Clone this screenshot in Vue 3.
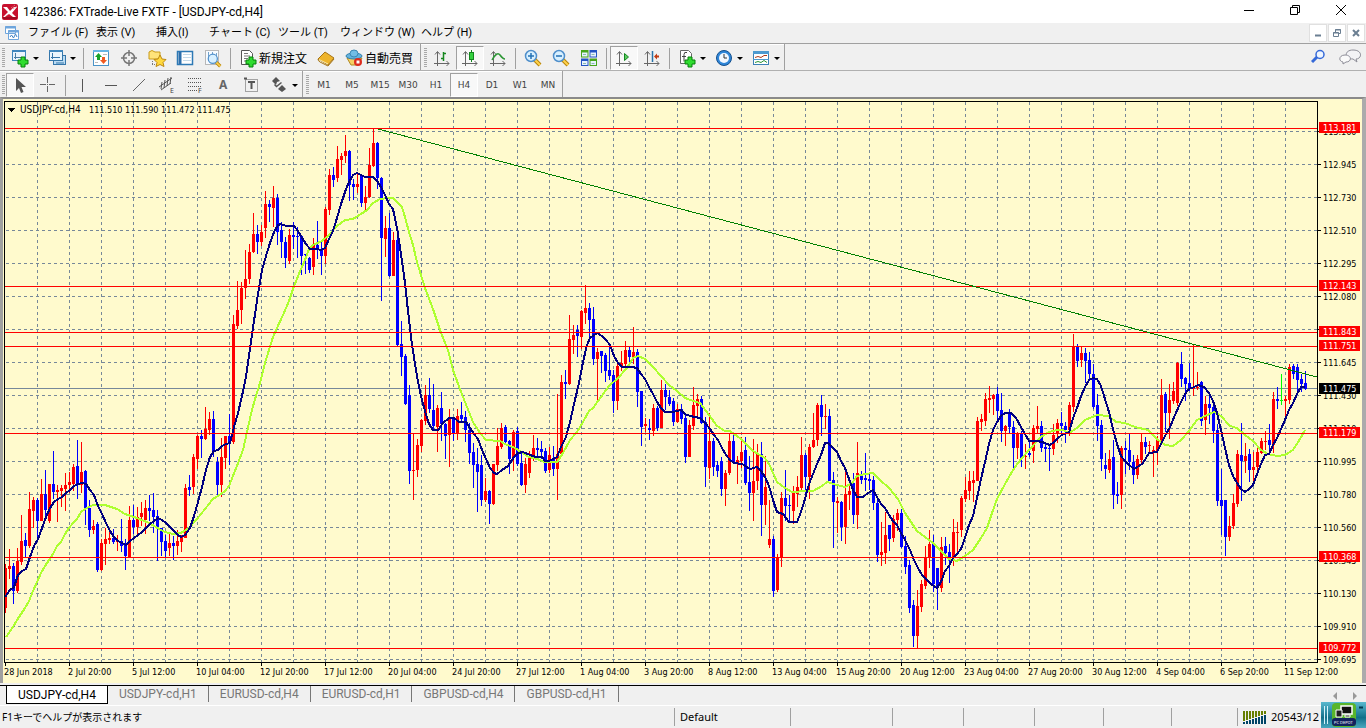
<script setup>
import { ref } from 'vue'

const menus = ['ファイル (F)', '表示 (V)', '挿入(I)', 'チャート (C)', 'ツール (T)', 'ウィンドウ (W)', 'ヘルプ (H)']
const frames = ['M1', 'M5', 'M15', 'M30', 'H1', 'H4', 'D1', 'W1', 'MN']
const frame = ref('H4')
const tabs = ['USDJPY-cd,H4', 'USDJPY-cd,H1', 'EURUSD-cd,H4', 'EURUSD-cd,H1', 'GBPUSD-cd,H4', 'GBPUSD-cd,H1']
const tab = ref(0)

const axes = '<path d="M4.500 3v14M1 14.500h15M2 5.500l2.500-3 2.500 3M13.500 12l2.500 2.500-2.500 2.500" fill="none" stroke="#666"/>'
const plus = '<path d="M10 8h4v3h3v4h-3v3h-4v-3H7v-4h3z" fill="#2fdc2f" stroke="#07800a"/>'
const lens = '<path d="M10 10l6 6" stroke="#b8860b" stroke-width="4"/><path d="M10 10l6 6" stroke="#ffd24d" stroke-width="2"/><circle cx="7" cy="7" r="5.500" fill="#d8f0ff" stroke="#4f8fcb" stroke-width="1.500"/>'

const icons = {
  newChart: '<rect x="1.500" y="1.500" width="13" height="10" fill="#eaf4fd" stroke="#3f86bd"/><path d="M1 2h14" stroke="#3f86bd" stroke-width="2"/><path d="M4.500 4v6M3 8.500h8" stroke="#4a7da5"/>' + plus,
  profiles: '<rect x="5.500" y="6.500" width="12" height="9" fill="#bcdcf3" stroke="#3576aa"/><rect x="1.500" y="1.500" width="13" height="10" fill="#eaf5fd" stroke="#3576aa"/><path d="M1 2h14" stroke="#3f86bd" stroke-width="2"/><path d="M4.500 4v6M3 8.500h9M8 14h8" stroke="#3576aa"/>',
  market: '<rect x="1.500" y="1.500" width="15" height="15" fill="#fff" stroke="#4a93c8"/><path d="M1 2h16" stroke="#67b5e4" stroke-width="2"/><path d="M5 11V8H3l3.500-4L10 8H8v3z" fill="#18a32a"/><path d="M10 8h3v3h2l-3.500 4L8 11h2z" fill="#f05a20"/><path d="M11 5.500h4M3 13.500h3" stroke="#bbb"/>',
  crosshair: '<circle cx="9" cy="9" r="5.500" fill="none" stroke="#777" stroke-width="1.500"/><path d="M9 1v6M9 11v6M1 9h6M11 9h6" stroke="#777" stroke-width="1.500"/>',
  navigator: '<path d="M1 3q3-3 6 0h5v7H1z" fill="#ffe37a" stroke="#c99b1a"/><path d="M4.500 12v4M4 15.500h4" stroke="#777" stroke-dasharray="1 1"/><path d="M12 6l2 4 4 .5-3 3 1 4-4-2-4 2 1-4-3-3 4-.5z" fill="#ffd93d" stroke="#be8810"/>',
  terminal: '<rect x="1.500" y="2.500" width="15" height="13" fill="#fff" stroke="#2d79b5" stroke-width="1.500"/><path d="M4 3v12" stroke="#2d6eab" stroke-width="3"/><path d="M7 5.500h8M7 8.500h8M7 11.500h8" stroke="#c4d9e8"/>',
  tester: '<rect x="1.500" y="1.500" width="13" height="14" fill="#f7fbff" stroke="#b8b8b8"/><path d="M4.500 3v8M8.500 3v8M12.500 4v8" stroke="#73a2ca"/><g transform="translate(3 4) scale(.83)">' + lens + '</g>',
  order: '<path d="M2.500 1.500h8l3 3v11h-11z" fill="#fff" stroke="#555"/><path d="M5 4.500h4M5 7h6M5 9.500h4M5 12h2" stroke="#777"/>' + plus,
  book: '<path d="M1 10l7-7 9 6-6 7z" fill="#eeb42c" stroke="#a77516"/><path d="M2 10.500l9 4.500" fill="none" stroke="#fff0b0"/><path d="M1 10q0 2 2 3l8 4 6-7" fill="none" stroke="#a77516"/>',
  expert: '<path d="M2 9l4 7h7l4-7z" fill="#f5d062" stroke="#b08a24"/><ellipse cx="9" cy="7" rx="8" ry="3" fill="#63b3df" stroke="#327fab"/><ellipse cx="9" cy="4.500" rx="4" ry="3.500" fill="#72bde5" stroke="#3a87b3"/><circle cx="13" cy="13" r="4" fill="#dc2b1c"/><rect x="11.500" y="11.500" width="3" height="3" fill="#fff"/>',
  bars: axes + '<path d="M10.500 3v9M8 9.500h3M10 4.500h3" stroke="#14861e" stroke-width="1.500" fill="none"/>',
  candles: axes + '<path d="M10.500 1v12" stroke="#14861e"/><rect x="8.500" y="3.500" width="4" height="7" fill="#35d13f" stroke="#14861e"/>',
  line: axes + '<path d="M3 11q5-9 8-5t5 4" stroke="#2b9634" stroke-width="1.500" fill="none"/>',
  zoomIn: lens + '<path d="M4 7h6M7 4v6" stroke="#2471b5" stroke-width="1.500"/>',
  zoomOut: lens + '<path d="M4 7h6" stroke="#2471b5" stroke-width="1.500"/>',
  tile: '<path d="M1 1h7.500v7.500H1zM9.500 9.500H17V17H9.500z" fill="#47a61b"/><path d="M9.500 1H17v7.500H9.500zM1 9.500h7.500V17H1z" fill="#2455c4"/><path d="M2 3.500h5.500v4H2zM10.500 3.500H16v4h-5.500zM2 12h5.500v4H2zM10.500 12H16v4h-5.500z" fill="#e8f3ff"/><path d="M3 5.500h3M11.500 5.500h3M3 14.500h3M11.500 14.500h3" stroke="#8abcb0"/>',
  scroll: axes + '<path d="M9.500 4.500l4 3.500-4 3.500z" fill="#5ccc62" stroke="#14861e"/>',
  shift: axes + '<path d="M9.500 2v11" stroke="#2672a8" stroke-width="1.500"/><path d="M11 7.500l3-3v2h2v2h-2v2z" fill="#c03b12"/>',
  indicators: '<path d="M2.500 1.500h8l3 3v10h-11z" fill="#fff" stroke="#666"/><path d="M9 3.500q-3-1-3 2v7M4 7.500h4" stroke="#444" fill="none"/>' + plus,
  clock: '<circle cx="9" cy="9" r="7.500" fill="#2f86d8" stroke="#15508e"/><circle cx="9" cy="9" r="5" fill="#f2f8ff"/><path d="M9 5v4h3" fill="none" stroke="#333"/>',
  template: '<rect x="1.500" y="2.500" width="15" height="13" fill="#fff" stroke="#3c80b5"/><path d="M1 3.500h16" stroke="#4d9ad0" stroke-width="3"/><path d="M1 10.500h16" stroke="#4d9ad0"/><path d="M3 8.500l3-1 3 1 3-2h3" fill="none" stroke="#b03a18"/><path d="M3 13.500l3-1 3 1 3-2 3 2" fill="none" stroke="#2a9437"/>',
  cursor: '<path d="M5 2v13l3-3 2 5 2.500-1-2-5H15z" fill="#555"/>',
  cross: '<path d="M8.500 1v6M8.500 10v6M1 8.500h6M10 8.500h6M8 8.500h1" stroke="#666"/>',
  vline: '<path d="M8.500 3v13" stroke="#555"/>',
  hline: '<path d="M3 9.500h12" stroke="#555"/>',
  trend: '<path d="M3 15L15 3" stroke="#666"/>',
  channel: '<path d="M1 11L14 2M3 14L13 7M4 6l-1 7M7 4l-1 8M10 2L9 10M13 1l-1 7" stroke="#555"/><text x="12" y="17">E</text>',
  fibo: '<path d="M2 2.500h14M2 6.500h14M2 10.500h14M2 14.500h9" stroke="#555" stroke-dasharray="1 1"/><text x="12" y="17">F</text>',
  text: '<text x="5" y="13" class="big">A</text>',
  label: '<rect x="3.500" y="3.500" width="12" height="12" fill="none" stroke="#555" stroke-dasharray="1 1"/><path d="M2 2.500h3M6 6h7M9.500 6v7" stroke="#555" stroke-width="2"/>',
  arrows: '<path d="M6 1l4 4-3 1-1 3-4-4zM12 9l4 4-4 3-4-3z" fill="#555"/><path d="M4.500 8.500l2 2 5-4" fill="none" stroke="#555" stroke-width="1.500"/>'
}

const row1 = ['newChart+', 'profiles+', '|', 'market', 'crosshair', 'navigator', 'terminal', 'tester', '|']
const row1b = ['bars', 'candles*', 'line', '|', 'zoomIn', 'zoomOut', 'tile', '|', 'scroll*', 'shift', '|', 'indicators+', 'clock+', 'template+']
const row2 = ['cursor*', 'cross', '|', 'vline', 'hline', 'trend', 'channel', 'fibo', 'text', 'label', 'arrows+']

const tools = list => list.map(t => ({
  id: t.replace(/[+*]/, ''),
  drop: t.endsWith('+'),
  on: t.endsWith('*')
}))

const groups1 = [tools(row1), tools(row1b)]
const group2 = tools(row2)

// one bar each: colour, high, body top, body bottom, low
const bars = `
r564,568,608,613 r549,566,569,579 b563,566,591,604 r548,561,591,593 r515,541,562,565 b533,540,546,557 r492,509,546,548 r497,500,511,528
b498,500,521,542 r479,494,521,521 b470,494,510,518 r484,484,521,523 b451,484,492,499 r485,490,492,522 r485,488,491,507 r473,485,489,511
r472,482,485,493 r464,467,484,491 b440,466,484,499 r442,472,485,493 b470,471,508,525 b500,508,530,537 r520,526,530,534 b522,524,570,572
r539,543,570,571 r528,539,544,565 r532,538,540,544 b529,538,542,544 r535,541,542,551 b519,541,546,552 b539,545,556,570 r506,520,557,557
b505,520,527,534 r507,517,527,535 r502,513,517,526 r500,508,520,534 b495,508,511,521 b493,510,517,533 b510,516,528,561 b528,528,542,556
b535,541,551,557 r534,543,548,556 b536,543,546,560 r530,541,546,555 r535,536,542,552 r484,488,538,538 b475,487,490,496 r454,457,487,494
r435,436,459,469 b430,436,439,458 r407,429,439,440 r412,419,430,435 b411,419,451,457 b457,462,485,495 r438,457,485,497 r436,436,458,469
b414,436,442,465 r315,324,442,444 r281,310,326,329 r282,288,310,324 r250,279,288,299 r244,252,279,284 r213,234,252,253 b225,234,242,254
r225,232,242,246 r191,204,228,238 b200,204,207,222 r186,198,208,227 b194,198,232,245 b222,230,242,258 b237,242,258,268 r229,235,261,264
b222,235,237,249 b227,236,237,258 b235,236,256,275 b254,254,255,274 b257,258,270,273 r238,244,267,275 b221,245,250,259 b242,250,256,275
r207,209,256,264 r169,175,210,215 b167,175,180,187 r146,159,178,182 r153,156,160,175 r135,151,156,163 b150,151,185,201 b179,184,187,200
r174,184,187,193 b175,176,203,207 r186,197,203,210 r148,165,197,198 r129,143,166,167 b142,143,178,189 b177,178,238,301 r216,228,239,257
b213,228,276,277 r232,240,276,276 b235,240,345,346 b321,344,357,376 b354,356,404,405 b385,395,471,484 r433,470,471,500 r439,445,470,477
r419,420,446,452 r385,395,421,425 b378,395,409,413 b384,410,426,429 r405,408,427,452 b392,408,424,441 b423,424,436,459 r409,418,435,467
b418,418,434,441 r409,416,433,440 b402,415,419,423 b411,417,430,442 b423,430,453,464 b443,452,465,488 b448,464,472,512 b455,465,500,506
r478,491,500,502 b490,491,504,524 r464,464,504,505 r428,446,465,471 r423,428,447,449 b425,427,442,445 b440,441,459,474 r430,432,457,471
b427,431,464,466 b453,463,485,486 r458,464,485,493 r451,458,473,478 r435,448,459,461 b438,448,450,457 b441,449,452,459 b448,451,471,473
r447,455,470,473 b446,458,469,476 r394,454,469,500 r375,382,454,455 b370,382,384,399 r315,339,384,385 r325,335,340,354 b325,330,336,357
r310,311,337,349 r285,308,313,324 b303,308,320,337 b307,319,359,365 r348,352,359,400 b351,351,356,373 b353,355,371,382 b345,370,376,380
b370,375,401,413 r363,366,401,410 r351,363,367,371 r341,350,364,366 b347,350,357,363 r327,352,357,364 b349,352,392,407 b391,391,427,446
r418,424,426,432 b419,428,430,440 r404,408,431,436 b406,408,428,431 r380,390,428,428 b384,390,397,410 b390,397,404,406 b398,401,422,426
r404,409,422,423 b404,409,419,424 b415,418,457,463 r420,425,457,457 r387,405,426,430 r394,399,406,417 b396,399,423,424 b417,422,467,487
r413,441,468,479 b438,441,467,476 b461,465,471,477 b457,461,489,496 r470,473,489,506 r434,441,473,475 b432,441,463,464 r456,460,463,484
r437,452,461,468 b437,450,483,485 b456,482,493,511 r439,481,493,521 r444,454,481,490 b442,454,505,536 r456,487,505,525 r500,539,545,548
b536,539,591,597 r554,557,590,592 r492,498,558,567 b470,498,506,521 b495,505,506,523 r486,492,511,524 r476,487,494,507 r437,455,488,491
b453,455,477,493 r444,447,477,499 r413,440,447,448 r403,405,440,446 b395,405,417,436 r404,416,417,429 b409,416,481,481 b472,480,502,548
r497,501,503,533 b501,502,527,541 r471,494,527,544 r481,491,495,510 b473,483,515,524 r442,473,515,529 b471,475,480,484 b453,478,480,491
b474,479,481,490 b476,480,503,510 b500,503,555,562 r522,552,555,566 r512,535,553,564 b525,525,539,551 r515,519,538,542 r509,513,520,531
b509,513,547,548 b536,546,567,574 b560,565,608,613 b600,605,636,647 r590,606,636,648 r580,584,607,612 r546,557,586,589 r530,544,558,568
b535,544,584,592 b568,568,588,610 r537,547,588,592 b537,546,553,565 b544,552,559,583 r519,532,558,566 r522,532,533,555 r496,498,530,537
r477,490,499,502 r471,481,491,500 r471,480,483,502 r417,421,481,481 r414,419,422,431 r393,399,421,426 r386,398,400,413 r394,395,399,415
b387,394,411,423 b393,410,431,442 r425,426,431,446 b409,413,427,433 b421,427,448,470 r432,433,448,459 b431,434,458,467 r444,456,457,469
b442,453,455,457 r425,428,451,463 r406,426,429,434 b421,426,448,452 b444,447,449,462 b444,448,449,471 r424,435,449,455 r419,423,433,443
b412,423,426,433 b422,426,430,443 r402,405,430,436 r334,347,407,412 b344,347,361,367 r347,353,360,367 b348,353,361,383 b352,360,374,381
b364,374,407,409 b394,405,426,441 b420,425,459,471 b453,465,469,479 r450,459,470,473 b440,457,495,509 b482,494,496,504 r446,448,495,509
b441,448,450,474 b434,450,462,470 b455,462,475,484 r455,459,475,479 r434,442,460,465 b437,442,447,454 r441,445,446,454 r446,450,453,477
r436,440,451,465 r379,395,440,441 b392,394,413,432 r384,400,413,439 r382,391,401,404 r362,363,403,406 b352,364,379,387 b377,378,384,401
b363,383,389,391 r344,387,389,396 r372,387,388,390 b381,382,421,426 r396,404,420,435 b394,404,408,424 b400,407,431,443 b424,430,501,506
b469,500,506,535 b500,500,537,556 r516,526,537,541 r494,503,526,529 r450,454,504,507 b423,455,461,501 r443,456,461,473 b449,454,470,482
r452,467,470,484 r447,452,467,470 r438,441,453,454 r431,441,442,450 b424,440,445,454 r392,399,445,453 b387,399,401,409 g374,400,401,405
r396,399,401,417 r364,367,400,404 b364,366,374,379 b364,367,380,391 b374,379,384,392 b371,383,389,390`.trim().split(/\s+/)

const colors = { r: '#ff0000', b: '#0000ff', g: '#00ff00' }
const candles = bars.map((row, i) => {
  const [high, top, bottom, low] = row.slice(1).split(',').map(Number)
  return { x: 5 + i * 4, high, top, bottom, low, fill: colors[row[0]] }
})

const fast = '5,597 10,590 14,587 18,575 22,571 26,569 30,557 34,546 38,539 42,528 46,517 50,508 54,502 58,499 62,497 66,493 70,490 74,486 78,484 82,483 86,484 90,490 94,495 98,506 102,514 106,523 110,531 114,537 118,541 122,543 126,545 130,541 134,538 138,535 142,532 146,528 150,524 154,521 158,518 162,520 166,523 170,527 174,531 178,535 181,537 185,535 190,528 194,516 198,502 202,487 206,470 210,457 214,451 218,450 222,446 226,444 230,443 234,427 238,413 242,396 246,377 250,349 254,321 258,294 262,270 266,256 270,243 274,232 278,225 281,224 286,226 294,226 298,231 302,238 306,244 310,249 317,249 321,250 325,248 329,239 333,231 337,218 341,204 345,192 349,182 353,175 357,173 361,175 365,177 373,177 377,181 381,187 385,195 389,204 393,209 397,228 401,254 405,283 408,311 412,345 417,376 421,396 425,411 429,424 433,430 438,430 443,423 449,418 454,418 459,422 466,422 470,428 474,434 478,439 482,450 486,459 490,468 494,473 497,474 502,470 508,466 514,457 518,453 523,452 530,455 536,457 542,457 545,461 549,461 557,457 561,447 566,437 570,422 574,404 579,383 583,362 587,345 590,338 597,333 602,336 606,340 610,345 614,356 618,363 622,367 632,367 637,368 641,374 645,379 649,387 653,394 657,402 661,408 665,412 673,412 681,410 685,414 690,416 700,418 706,424 710,429 714,435 718,440 722,448 726,455 730,460 734,463 742,464 750,469 757,467 761,471 765,477 769,486 773,500 777,512 783,514 789,522 797,522 801,512 805,499 809,484 813,474 817,464 821,455 825,443 828,443 832,447 837,452 841,461 845,468 849,479 853,490 857,497 863,497 868,493 873,490 877,497 881,504 885,508 889,515 893,521 897,525 901,533 905,540 910,550 914,560 918,568 922,575 927,580 932,585 937,588 941,582 945,571 949,566 953,558 957,554 961,549 965,538 969,525 973,516 977,498 981,479 985,462 989,444 993,430 997,422 1001,416 1005,413 1011,413 1016,418 1021,427 1025,434 1029,441 1037,441 1042,442 1050,445 1054,442 1058,438 1063,434 1069,433 1073,418 1077,408 1081,396 1085,387 1089,380 1093,378 1097,379 1101,386 1105,399 1109,412 1113,429 1117,444 1121,456 1125,461 1129,465 1134,469 1139,466 1143,463 1149,453 1157,452 1161,444 1165,436 1170,427 1175,415 1180,404 1185,394 1189,389 1194,387 1198,385 1204,387 1209,393 1213,401 1217,413 1221,430 1225,448 1229,465 1233,476 1237,483 1241,489 1245,492 1249,489 1253,485 1257,474 1261,464 1265,455 1269,454 1273,445 1277,438 1281,429 1285,420 1289,410 1293,403 1297,394 1301,387 1305,387'
const slow = '6,637 13,627 17,620 21,614 25,608 29,601 33,591 37,582 41,573 45,566 49,560 53,554 57,546 61,542 65,534 69,528 73,523 77,519 81,512 85,509 93,505 105,505 117,509 125,514 137,518 149,523 161,530 165,532 173,534 181,533 189,528 197,519 205,509 213,499 221,494 225,491 229,486 233,476 240,458 243,450 247,432 251,414 255,399 260,383 265,363 269,350 273,337 277,328 283,315 289,301 294,286 301,269 305,260 309,249 313,245 322,241 329,235 337,226 345,220 353,219 361,214 367,210 373,203 380,199 389,198 393,198 402,207 405,217 409,232 413,245 417,262 425,288 433,309 441,333 448,350 453,370 461,392 469,412 473,422 480,433 486,440 500,441 505,444 515,448 521,452 529,457 537,459 545,462 557,462 563,453 570,440 577,432 583,422 589,411 593,408 601,397 609,386 617,379 627,368 633,358 638,356 645,359 653,367 661,376 669,385 677,391 685,398 693,401 700,403 709,415 717,426 725,431 730,431 741,439 753,451 765,458 770,466 777,482 785,488 792,492 807,491 813,491 822,486 827,482 837,485 845,487 852,483 857,476 865,474 873,473 880,480 889,488 898,499 905,513 917,531 933,543 942,552 949,559 957,561 965,556 973,550 981,538 987,528 992,513 997,499 1005,484 1013,470 1021,459 1029,450 1041,437 1049,432 1057,430 1063,430 1069,433 1077,428 1085,420 1097,415 1109,416 1116,422 1125,423 1135,427 1148,430 1157,439 1165,445 1173,446 1181,440 1189,431 1197,420 1205,416 1214,412 1221,416 1230,426 1237,428 1245,435 1253,441 1261,450 1268,454 1277,456 1285,455 1293,450 1300,439 1305,430'

const prices = ['113.160', '112.945', '112.730', '112.510', '112.295', '112.080', '111.865', '111.645', '111.430', '111.210', '110.995', '110.780', '110.560', '110.345', '110.130', '109.910', '109.695']
const dates = ['28 Jun 2018', '2 Jul 20:00', '5 Jul 12:00', '10 Jul 04:00', '12 Jul 20:00', '17 Jul 12:00', '20 Jul 04:00', '24 Jul 20:00', '27 Jul 12:00', '1 Aug 04:00', '3 Aug 20:00', '8 Aug 12:00', '13 Aug 04:00', '15 Aug 20:00', '20 Aug 12:00', '23 Aug 04:00', '27 Aug 20:00', '30 Aug 12:00', '4 Sep 04:00', '6 Sep 20:00', '11 Sep 12:00']
const levels = [
  { price: '113.181', y: 128 },
  { price: '112.143', y: 286 },
  { price: '111.843', y: 332 },
  { price: '111.751', y: 346 },
  { price: '111.179', y: 433 },
  { price: '110.368', y: 557 },
  { price: '109.772', y: 648 }
]
</script>

<template>
  <div class="terminal">
    <header class="titlebar">
      <svg class="logo" viewBox="0 0 16 16">
        <rect width="16" height="16" rx="2" fill="#c8102e"/>
        <path d="M1 3h4l3 4 4-4h3l-5 6 4 4h-3l-4-3-4 3H1l5-5z" fill="#fff"/>
        <path d="M9 4l4-3M3 13l3-3M11 5l4-3" stroke="#e0808c" stroke-dasharray="1 1"/>
        <path d="M1 14h14" stroke="#a00c22" stroke-width="2"/>
      </svg>
      <h1>142386: FXTrade-Live FXTF - [USDJPY-cd,H4]</h1>
      <div class="window-buttons">
        <button aria-label="Minimize"><svg viewBox="0 0 12 12"><path d="M1 6.500h10" stroke="#000"/></svg></button>
        <button aria-label="Restore"><svg viewBox="0 0 12 12"><path d="M1.500 3.500h7v7h-7zM3.500 3V1.500h7v7H9" fill="none" stroke="#000"/></svg></button>
        <button aria-label="Close"><svg viewBox="0 0 12 12"><path d="M1 1l10 10M11 1L1 11" stroke="#000"/></svg></button>
      </div>
    </header>

    <nav class="menubar">
      <svg class="doc" viewBox="0 0 14 14">
        <path d="M.5.500h10v7H.5zM3.500 4.500h10v9h-10z" fill="#fff" stroke="#6ea5dc"/>
        <path d="M0 1.500h11M3 5.500h11" stroke="#6ea5dc" stroke-width="2"/>
        <path d="M5 11l1.500-2 2 3 2-4 1.500 3" fill="none" stroke="#4182c4"/>
      </svg>
      <div class="menus">
        <a v-for="menu in menus" :key="menu" href="#">{{ menu }}</a>
      </div>
      <div class="mdi">
        <button aria-label="Minimize chart"><svg viewBox="0 0 10 10"><path d="M2 7.500h6" stroke="#6b7f92" stroke-width="2"/></svg></button>
        <button aria-label="Restore chart"><svg viewBox="0 0 10 10"><path d="M1.500 4.500h5v4h-5zM3.500 4V1.500h5v4H7M1 5h6M3 2h6" fill="none" stroke="#6b7f92"/></svg></button>
        <button aria-label="Close chart"><svg viewBox="0 0 10 10"><path d="M2 2l6 6M8 2L2 8" stroke="#6b7f92" stroke-width="2"/></svg></button>
      </div>
    </nav>

    <div class="toolbar first">
      <div v-for="(group, g) in groups1" :key="g" class="group">
        <i class="handle"></i>
        <template v-for="(tool, i) in group" :key="i">
          <i v-if="tool.id === '|'" class="sep"></i>
          <button v-else :class="{ drop: tool.drop, on: tool.on }" :aria-label="tool.id">
            <svg viewBox="0 0 18 18" v-html="icons[tool.id]"></svg>
          </button>
        </template>
        <template v-if="g === 0">
          <button class="wide"><svg viewBox="0 0 18 18" v-html="icons.order"></svg>新規注文</button>
          <button aria-label="book"><svg viewBox="0 0 18 18" v-html="icons.book"></svg></button>
          <button class="wide"><svg viewBox="0 0 18 18" v-html="icons.expert"></svg>自動売買</button>
        </template>
      </div>
      <div class="extras">
        <svg viewBox="0 0 16 16"><circle cx="9" cy="5.500" r="4" fill="#eef5ff" stroke="#3569d8" stroke-width="1.500"/><path d="M6 8l-5 5" stroke="#3569d8" stroke-width="3"/></svg>
        <svg class="chat" viewBox="0 0 22 16"><path d="M14 1c10 0 9 9 3 9l1 3-4-3c-9 0-9-9 0-9z" fill="#f3f3f6" stroke="#8e8e98"/><path d="M6 6c7 0 7 7 1 7l-3 2v-2C-1 12 0 6 6 6z" fill="#fafafa" stroke="#8e8e98"/></svg>
      </div>
    </div>

    <div class="toolbar second">
      <div class="group">
        <i class="handle"></i>
        <template v-for="(tool, i) in group2" :key="i">
          <i v-if="tool.id === '|'" class="sep"></i>
          <button v-else :class="{ drop: tool.drop, on: tool.on }" :aria-label="tool.id">
            <svg viewBox="0 0 18 18" v-html="icons[tool.id]"></svg>
          </button>
        </template>
      </div>
      <div class="group frames">
        <i class="handle"></i>
        <button v-for="f in frames" :key="f" :class="{ on: f === frame }" @click="frame = f">{{ f }}</button>
      </div>
    </div>

    <main class="chart">
      <svg viewBox="3 99 1359 584" shape-rendering="crispEdges">
        <g class="grid">
          <path v-for="n in 40" :key="'v' + n" :d="`M${n * 32 + 5.5} 102V662`"/>
          <path v-for="(p, i) in prices" :key="p" :d="`M6 ${131.5 + i * 33}H1317`"/>
        </g>
        <path d="M5 388.500H1317" stroke="#778899"/>
        <g v-for="(c, i) in candles" :key="i" :fill="c.fill">
          <rect :x="c.x" :y="c.high" width="1" :height="c.low - c.high"/>
          <rect :x="c.x - 1" :y="c.top" width="3" :height="c.bottom - c.top"/>
        </g>
        <polyline :points="slow" fill="none" stroke="#adff2f" stroke-width="2"/>
        <polyline :points="fast" fill="none" stroke="#000080" stroke-width="2"/>
        <path v-for="l in levels" :key="l.y" :d="`M5 ${l.y + 0.5}H1317`" stroke="#ff0000"/>
        <path d="M378 129L1317 377" stroke="#008000"/>
        <path d="M4.500 101.500H1317.500V662.500H4.500z" fill="none" stroke="#000"/>
        <g v-for="(p, i) in prices" :key="p">
          <path :d="`M1318 ${131.5 + i * 33}h3`" stroke="#000"/>
          <text x="1323" :y="135 + i * 33">{{ p }}</text>
        </g>
        <g v-for="(d, i) in dates" :key="d">
          <path :d="`M${5.5 + i * 64} 663v3`" stroke="#000"/>
          <text :x="4 + i * 64" y="675">{{ d }}</text>
        </g>
        <g v-for="l in levels" :key="l.price">
          <rect x="1319" :y="l.y - 6" width="41" height="11" fill="#ff0000"/>
          <text x="1323" :y="l.y + 3" class="light">{{ l.price }}</text>
        </g>
        <rect x="1319" y="383" width="41" height="11"/>
        <text x="1323" y="392" class="light">111.475</text>
        <path d="M8 108h7l-3.500 4z"/>
        <text x="20" y="113" class="symbol">USDJPY-cd,H4</text>
        <text x="89" y="113">111.510 111.590 111.472 111.475</text>
      </svg>
    </main>

    <div class="tabs">
      <button v-for="(t, i) in tabs" :key="t" :class="{ active: i === tab }" @click="tab = i">{{ t }}</button>
      <span class="scrollers">
        <svg viewBox="0 0 24 8"><path d="M4 0v8L0 4zM20 0v8l4-4z" fill="#999"/></svg>
      </span>
    </div>

    <footer class="status">
      <span>F1キーでヘルプが表示されます</span>
      <span class="latin">Default</span>
      <span></span>
      <span></span>
      <span></span>
      <span></span>
      <span></span>
      <span></span>
      <span class="traffic">
        <svg viewBox="0 0 24 14">
          <path v-for="n in 8" :key="n" :d="`M${n * 3 - 2} ${13 - n}V14`" stroke="#004466" stroke-width="2"/>
          <path v-for="n in 8" :key="'t' + n" :d="`M${n * 3 - 2} 1V${12 - n}`" stroke="#667f00" stroke-width="2"/>
        </svg>
        20543/12
      </span>
    </footer>

    <div class="gadget">
      <svg viewBox="0 0 45 26">
        <path d="M3.500 4v18M6.500 4v18" stroke="#d6f3fa"/>
        <rect x="11" y="1" width="24" height="24" rx="4" fill="#58b52c"/>
        <path d="M20 4h11v8H20z" fill="#111" stroke="#fff" stroke-width="1.500"/>
        <path d="M15 8h6v7h-6zM24 13h5v2h-5z" fill="#222" stroke="#fff"/>
        <rect x="11" y="16" width="24" height="8" rx="3" fill="#12225e"/>
        <text x="13" y="22">PC DEPOT</text>
        <path d="M38 5.500h4" stroke="#033a4c" stroke-width="2"/>
      </svg>
    </div>
  </div>
</template>

<style>
body {
  margin: 0;
}
</style>

<style scoped>
.terminal {
  position: relative;
  width: 100%;
  min-height: 100vh;
  display: flex;
  flex-direction: column;
  overflow: hidden;
  background: #f0f0f0;
  color: #000;
  font-family: "Noto Sans", "Noto Sans CJK JP", sans-serif;
  font-size: 12px;
}

button {
  padding: 0;
  border: 0;
  background: none;
  color: inherit;
  font: inherit;
}

.titlebar {
  height: 23px;
  display: flex;
  align-items: center;
  background: #fff;
}

.logo {
  width: 16px;
  height: 16px;
  margin: 0 5px 0 2px;
}

h1 {
  flex: 1;
  margin: 0;
  font-family: Roboto, sans-serif;
  font-size: 12px;
  font-weight: normal;
  line-height: 16px;
}

.window-buttons {
  display: flex;
  padding-right: 2px;
}

.window-buttons button {
  width: 46px;
  height: 22px;
}

.window-buttons svg {
  width: 12px;
  height: 12px;
}

.menubar {
  height: 20px;
  display: flex;
  align-items: center;
}

.doc {
  width: 14px;
  height: 14px;
  margin: 0 9px 0 5px;
}

.menus {
  flex: 1;
  display: grid;
  grid-template-columns: 68px 60px 53px 69px 62px 81px 60px;
}

.menus a {
  color: #000;
  text-decoration: none;
  font-family: Roboto, "Noto Sans CJK JP", sans-serif;
  font-size: 11px;
  line-height: 16px;
  white-space: nowrap;
}

.mdi {
  display: flex;
  gap: 1px;
  padding-right: 1px;
}

.mdi button {
  width: 18px;
  height: 18px;
  display: grid;
  place-items: center;
  border: 1px solid #e0e0e0;
  background: #fff;
}

.mdi svg {
  width: 10px;
  height: 10px;
}

.toolbar {
  display: flex;
  box-sizing: border-box;
}

.first {
  height: 28px;
  border-top: 1px solid #a0a0a0;
  border-bottom: 1px solid #b0b0b0;
}

.second {
  height: 26px;
}

.group {
  display: flex;
  align-items: center;
  box-sizing: border-box;
  padding: 2px 0 0 3px;
  border-right: 1px solid #a0a0a0;
  box-shadow: inset 0 1px #fff;
}

.group:first-child {
  padding: 2px 7px 0 2px;
}

.second .group:first-child {
  padding-right: 0;
}

.handle {
  width: 3px;
  height: 20px;
  margin-right: 1px;
  background: repeating-linear-gradient(#a8a8a8 0 1px, #f0f0f0 1px 2px);
}

.sep {
  width: 1px;
  height: 21px;
  margin: 0 3px;
  background: #a0a0a0;
}

.group button {
  width: 28px;
  height: 24px;
  display: flex;
  align-items: center;
  justify-content: center;
}

.group button.on {
  box-sizing: border-box;
  border: 1px solid #a0a0a0;
  border-color: #a0a0a0 #fff #fff #a0a0a0;
  background: #f8f8f8;
}

.group svg {
  width: 18px;
  height: 18px;
  flex: none;
  overflow: visible;
  font-size: 7px;
}

.group svg :deep(text) {
  fill: #444;
}

.group svg :deep(.big) {
  font-size: 12px;
  font-weight: bold;
  fill: #666;
}

.group .drop {
  width: 37px;
  justify-content: flex-start;
  gap: 4px;
  padding-left: 5px;
  box-sizing: border-box;
}

.drop::after {
  content: "";
  border: 3px solid transparent;
  border-top-color: #000;
  border-bottom: 0;
}

.group .wide {
  width: auto;
  gap: 2px;
  padding: 0 5px;
}

.first .wide:last-child {
  padding-right: 0;
}

.frames button {
  color: #444;
  font-family: "DejaVu Sans", sans-serif;
  font-size: 9px;
}

.extras {
  display: flex;
  align-items: center;
  gap: 12px;
  margin-left: auto;
  padding-right: 5px;
}

.extras svg {
  width: 16px;
  height: 16px;
}

.extras .chat {
  width: 22px;
}

.chart {
  border-top: 2px solid #8a8a8a;
  border-left: 3px solid #a0a0a0;
  border-right: 4px solid #ababab;
  background: #fffacd;
}

.chart svg {
  display: block;
  width: 100%;
  height: auto;
  font-family: "DejaVu Sans Condensed", "DejaVu Sans", sans-serif;
  font-size: 9px;
}

.chart .symbol {
  font-size: 10px;
}

.grid path {
  stroke: #778899;
  stroke-dasharray: 3 3;
}

.light {
  fill: #fff;
}

.tabs {
  height: 21px;
  margin-top: 2px;
  box-sizing: border-box;
  display: flex;
  padding-left: 6px;
  border-top: 1px solid #000;
  border-bottom: 1px solid #fff;
  font-family: Roboto, sans-serif;
}

.tabs button {
  padding: 0 11px;
  color: #777;
  line-height: 16px;
}

.tabs button:not(.active) {
  border-right: 1px solid #777;
  height: 16px;
}

.tabs .active {
  height: 18px;
  border: 1px solid #000;
  border-top: 0;
  background: #fff;
  color: #000;
}

.scrollers {
  display: flex;
  align-items: center;
  margin-left: auto;
  padding-right: 9px;
}

.scrollers svg {
  width: 24px;
  height: 8px;
}

.status {
  flex: 1;
  min-height: 22px;
  display: grid;
  grid-template-columns: 675fr 116fr 102fr 71fr 71fr 69fr 68fr 66fr 128fr;
  align-items: center;
  font-size: 10px;
  line-height: 18px;
}

.status span {
  height: 18px;
  padding-left: 5px;
  border-right: 1px solid #a0a0a0;
}

.status span:first-child {
  padding-left: 2px;
}

.status .latin {
  font-size: 11px;
}

.status .traffic {
  display: flex;
  align-items: center;
  gap: 4px;
  border: 0;
  font-size: 11px;
}

.traffic svg {
  width: 24px;
  height: 14px;
}

.gadget {
  position: absolute;
  right: 0;
  bottom: 0;
  width: 45px;
  height: 26px;
  background: linear-gradient(#5ab9cf, #12708a 60%, #4aa9bf);
}

.gadget svg {
  display: block;
  font-size: 4px;
}

.gadget text {
  fill: #fff;
}
</style>
